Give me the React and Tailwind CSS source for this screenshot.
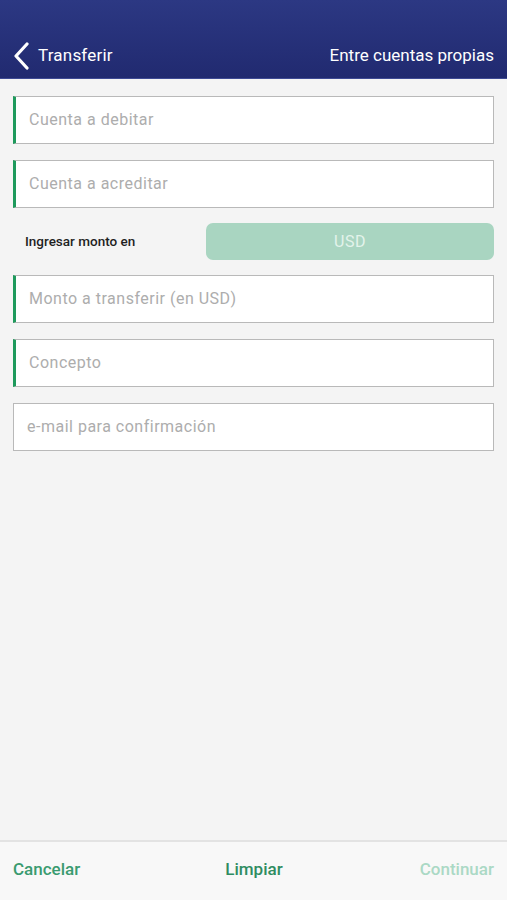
import React from 'react';

const fields = [
  { label: 'Cuenta a debitar', required: true },
  { label: 'Cuenta a acreditar', required: true },
];

const fields2 = [
  { label: 'Monto a transferir (en USD)', required: true },
  { label: 'Concepto', required: true },
  { label: 'e-mail para confirmación', required: false },
];

const Field = ({ label, required }) => (
  <div
    className={`h-[48px] bg-white border border-[#b9b9b9] flex items-center ${
      required ? 'border-l-[3px] border-l-[#1e9a5c] pl-[13px]' : 'pl-[13px]'
    }`}
  >
    <span className="text-[16px] text-[#adadad] tracking-[0.5px]">{label}</span>
  </div>
);

const App = () => {
  return (
    <div
      className="w-[507px] h-[900px] bg-[#f4f4f4] flex flex-col"
      style={{ fontFamily: 'Roboto, "Noto Sans", sans-serif' }}
    >
      {/* HEADER */}
      <div className="h-[79px] bg-gradient-to-b from-[#2c3883] to-[#212a70] border-b border-b-[#3e4a94] flex items-end pb-[8px] px-[13px]">
        <div className="flex items-center gap-[9px] h-[28px]">
          <svg width="16" height="28" viewBox="0 0 16 28" fill="none">
            <path d="M14 2 L3 14 L14 26" stroke="white" strokeWidth="3.2" strokeLinecap="round" strokeLinejoin="round" />
          </svg>
          <span className="text-white text-[17px] tracking-[0.2px]">Transferir</span>
        </div>
        <span className="ml-auto h-[28px] flex items-center text-white text-[17px]">Entre cuentas propias</span>
      </div>

      {/* FORM */}
      <div className="flex flex-col px-[13px] pt-[17px] gap-[16px]">
        {fields.map((f) => (
          <Field key={f.label} {...f} />
        ))}
        <div className="flex items-center h-[37px] -my-[1px]">
          <span className="w-[193px] pl-[12px] text-[13.5px] font-medium text-[#1f1f1f]">Ingresar monto en</span>
          <div className="flex-1 h-[37px] rounded-[7px] bg-[#a9d5c1] flex items-center justify-center">
            <span className="text-[#e3f3eb] text-[16px] tracking-[0.5px]">USD</span>
          </div>
        </div>
        {fields2.map((f) => (
          <Field key={f.label} {...f} />
        ))}
      </div>

      {/* FOOTER */}
      <div className="mt-auto h-[60px] bg-[#f8f8f8] border-t-2 border-t-[#e3e3e3] flex items-center justify-between px-[13px] pb-[2px]">
        <span className="text-[17px] font-medium text-[#3a9b70]">Cancelar</span>
        <span className="text-[17px] font-medium text-[#2f8c61] pl-[8px]">Limpiar</span>
        <span className="text-[17px] font-medium text-[#abd9c5]">Continuar</span>
      </div>
    </div>
  );
};

export default App;
